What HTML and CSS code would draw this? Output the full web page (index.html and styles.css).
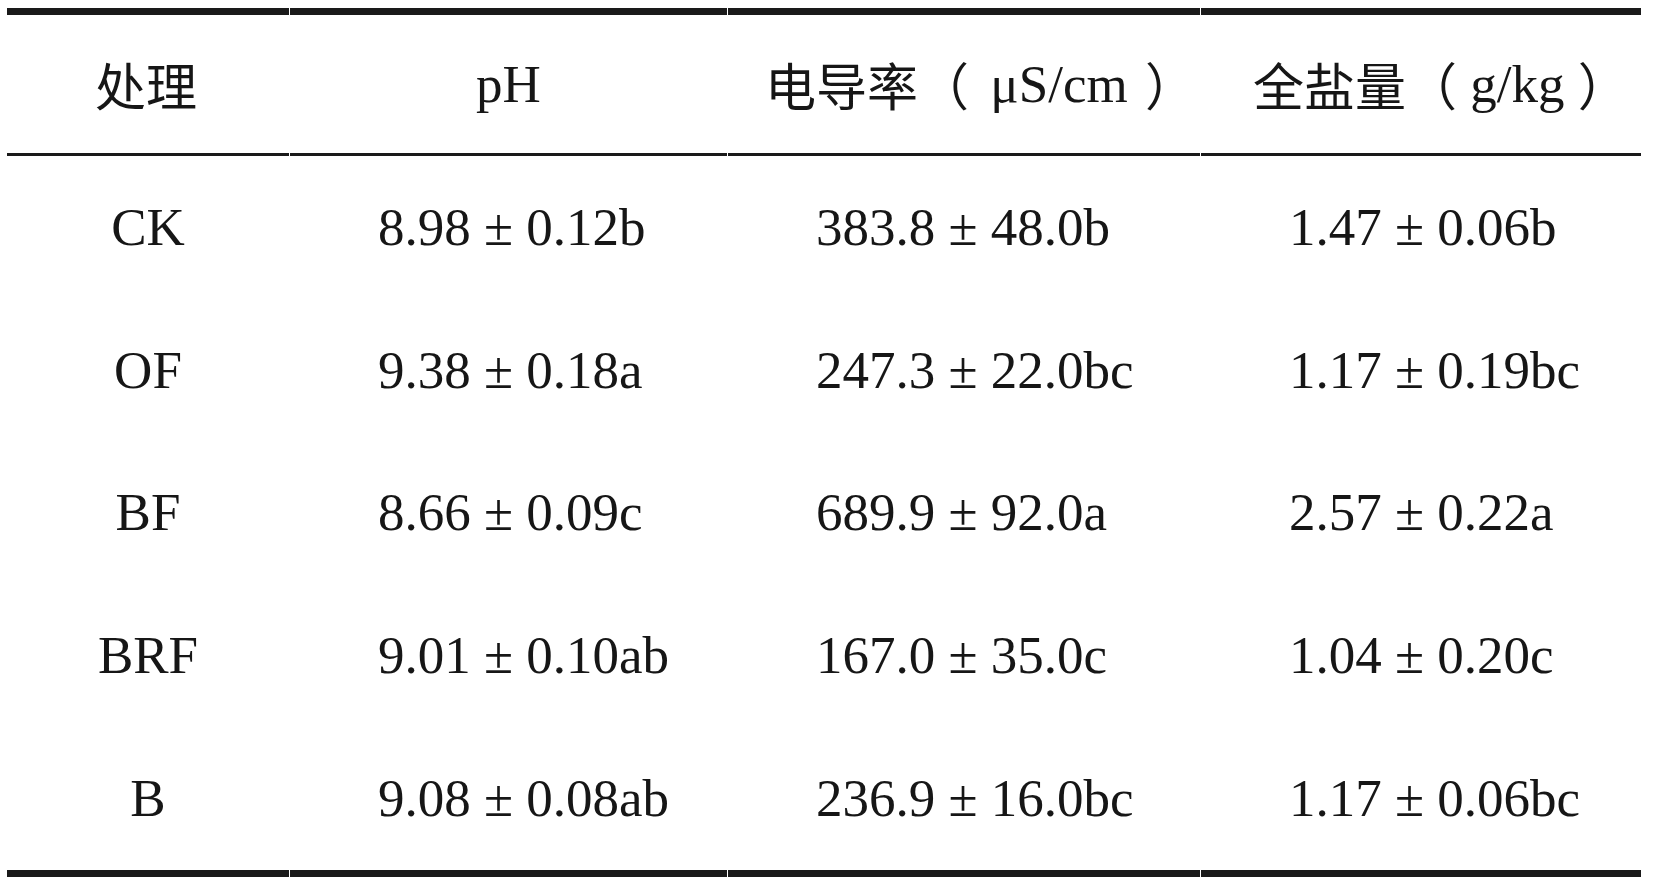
FILE: index.html
```html
<!DOCTYPE html>
<html lang="zh">
<head>
<meta charset="utf-8">
<title>处理效果表</title>
<link rel="stylesheet" href="styles.css">
</head>
<body>
<div class="table">
  <div class="row head">
    <div class="cell c1 h1"><span class="zh">处理</span></div>
    <div class="cell c2 h2">pH</div>
    <div class="cell c3 h3"><span class="zh">电导率（</span><span class="unit unit-wide"> μS/cm </span><span class="zh">）</span></div>
    <div class="cell c4 h4"><span class="zh">全盐量（</span><span class="unit"> g/kg </span><span class="zh">）</span></div>
  </div>
  <div class="row body">
    <div class="cell c1">CK</div>
    <div class="cell c2">8.98 ± 0.12b</div>
    <div class="cell c3">383.8 ± 48.0b</div>
    <div class="cell c4">1.47 ± 0.06b</div>
  </div>
  <div class="row body">
    <div class="cell c1">OF</div>
    <div class="cell c2">9.38 ± 0.18a</div>
    <div class="cell c3">247.3 ± 22.0bc</div>
    <div class="cell c4">1.17 ± 0.19bc</div>
  </div>
  <div class="row body">
    <div class="cell c1">BF</div>
    <div class="cell c2">8.66 ± 0.09c</div>
    <div class="cell c3">689.9 ± 92.0a</div>
    <div class="cell c4">2.57 ± 0.22a</div>
  </div>
  <div class="row body">
    <div class="cell c1">BRF</div>
    <div class="cell c2">9.01 ± 0.10ab</div>
    <div class="cell c3">167.0 ± 35.0c</div>
    <div class="cell c4">1.04 ± 0.20c</div>
  </div>
  <div class="row body last">
    <div class="cell c1">B</div>
    <div class="cell c2">9.08 ± 0.08ab</div>
    <div class="cell c3">236.9 ± 16.0bc</div>
    <div class="cell c4">1.17 ± 0.06bc</div>
  </div>
</div>
</body>
</html>
```
FILE: styles.css
```css
html, body {
  margin: 0;
  padding: 0;
  background: #ffffff;
}

body {
  font-family: "Liberation Serif", "Noto Sans CJK SC", serif;
  font-size: 53px;
  color: #161616;
}

.table {
  margin: 8px 0 0 7px;
  width: 1633px;
}

.row {
  display: grid;
  grid-template-columns: 282px 437px 472px 440px;
  column-gap: 1px;
}

.cell {
  box-sizing: border-box;
  display: flex;
  align-items: center;
  white-space: pre;
  line-height: 1;
}

.head .cell {
  height: 148px;
  border-top: 7px solid #1a1a1a;
  border-bottom: 3px solid #1a1a1a;
}

.body .cell {
  height: 142.8px;
  padding-left: 88px;
}

.body.last .cell {
  height: 149.8px;
  border-bottom: 7px solid #1a1a1a;
}

.body .c1 {
  padding-left: 0;
  justify-content: center;
}

.zh {
  font-family: "Noto Sans CJK SC", sans-serif;
  font-size: 51px;
  font-weight: 400;
}

.unit-wide {
  margin-left: 8px;
  margin-right: 4px;
}

.h1 {
  padding-left: 88px;
}

.h2 {
  justify-content: center;
}

.h3 {
  padding-left: 37px;
}

.h4 {
  padding-left: 52px;
}
```
